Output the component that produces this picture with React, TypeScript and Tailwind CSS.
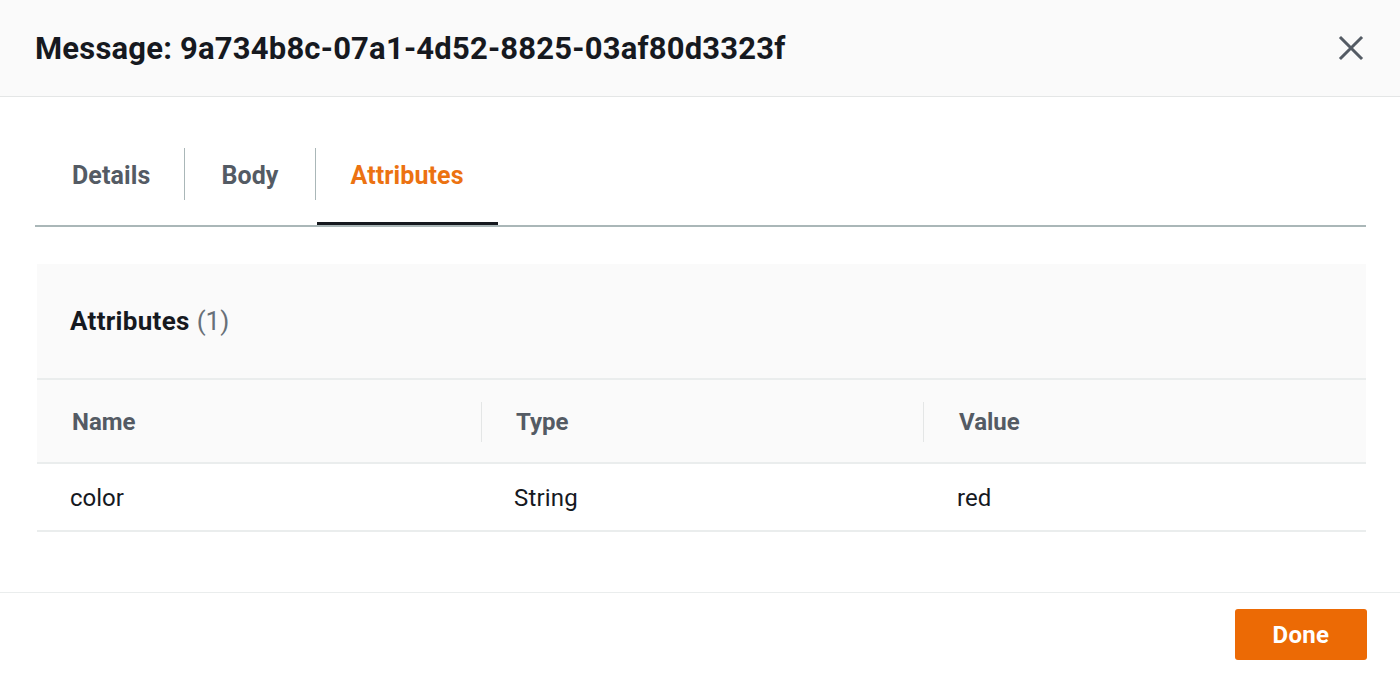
import React from "react";

export default function App() {
  return (
    <div className="w-[1400px] h-[674px] bg-white flex flex-col text-[#16191f]" style={{ fontFamily: "Roboto, 'Liberation Sans', sans-serif" }}>
      <div className="h-[97px] bg-[#fafafa] border-b border-[#e4e6e6] flex items-center justify-between pl-[35px] pr-[36px] shrink-0">
        <h1 className="text-[31px] font-bold tracking-[0.2px] pt-[2px]">Message: 9a734b8c-07a1-4d52-8825-03af80d3323f</h1>
        <svg width="26" height="26" viewBox="0 0 26 26" fill="none" stroke="#545b64" strokeWidth="3" strokeLinecap="square">
          <path d="M3 3 L23 23 M23 3 L3 23" />
        </svg>
      </div>

      <div className="flex-1 pl-[35px] pr-[34px] pt-[54px]">
        <div className="flex items-end border-b-2 border-[#aab7b8] h-[76px]">
          <div className="flex items-center h-[52px] mb-[25px] pt-[4px] pl-[37px] pr-[34px] border-r border-[#aab7b8] text-[25px] font-bold text-[#545b64] tracking-[0.1px]">Details</div>
          <div className="flex items-center h-[52px] mb-[25px] pt-[4px] px-[36px] border-r border-[#aab7b8] text-[25px] font-bold text-[#545b64] tracking-[0.1px]">Body</div>
          <div className="relative flex items-center h-[52px] mb-[25px] pt-[4px] pl-[34px] pr-[34px] ml-[1px] text-[25px] font-bold text-[#ec7211] tracking-[0.1px]">
            Attributes
            <div className="absolute left-0 right-0 -bottom-[25px] h-[3px] bg-[#16191f]" />
          </div>
        </div>

        <div className="mt-[37px] ml-[2px]">
          <div className="h-[116px] bg-[#fafafa] border-b-2 border-[#eaeded] flex items-center pl-[33px] pt-[1px]">
            <span className="text-[26px] font-bold tracking-[0.3px]">Attributes</span>
            <span className="text-[26px] text-[#687078] ml-[7px]">(1)</span>
          </div>
          <div className="grid grid-cols-[444px_442px_1fr] h-[84px] bg-[#fafafa] border-b-2 border-[#eaeded]">
            <div className="flex items-center pl-[35px] pt-[2px] text-[24px] font-bold text-[#545b64]">Name</div>
            <div className="flex items-center pl-[35px] pt-[2px] text-[24px] font-bold text-[#545b64] relative">
              <div className="absolute left-0 top-[22px] h-[40px] w-[1px] bg-[#e4e6e6]" />
              Type
            </div>
            <div className="flex items-center pl-[36px] pt-[2px] text-[24px] font-bold text-[#545b64] relative">
              <div className="absolute left-0 top-[22px] h-[40px] w-[1px] bg-[#e4e6e6]" />
              Value
            </div>
          </div>
          <div className="grid grid-cols-[444px_442px_1fr] h-[68px] border-b-2 border-[#eaeded]">
            <div className="flex items-center pl-[33px] pt-[2px] text-[24px]">color</div>
            <div className="flex items-center pl-[33px] pt-[2px] text-[24px] tracking-[0.2px]">String</div>
            <div className="flex items-center pl-[34px] pt-[2px] text-[24px]">red</div>
          </div>
        </div>
      </div>

      <div className="h-[82px] border-t border-[#eaeded] flex items-start justify-end pr-[33px] pt-[16px] shrink-0">
        <button className="w-[132px] h-[51px] bg-[#ec6a05] rounded-[3px] text-white text-[24px] font-bold tracking-[0.3px]">Done</button>
      </div>
    </div>
  );
}
